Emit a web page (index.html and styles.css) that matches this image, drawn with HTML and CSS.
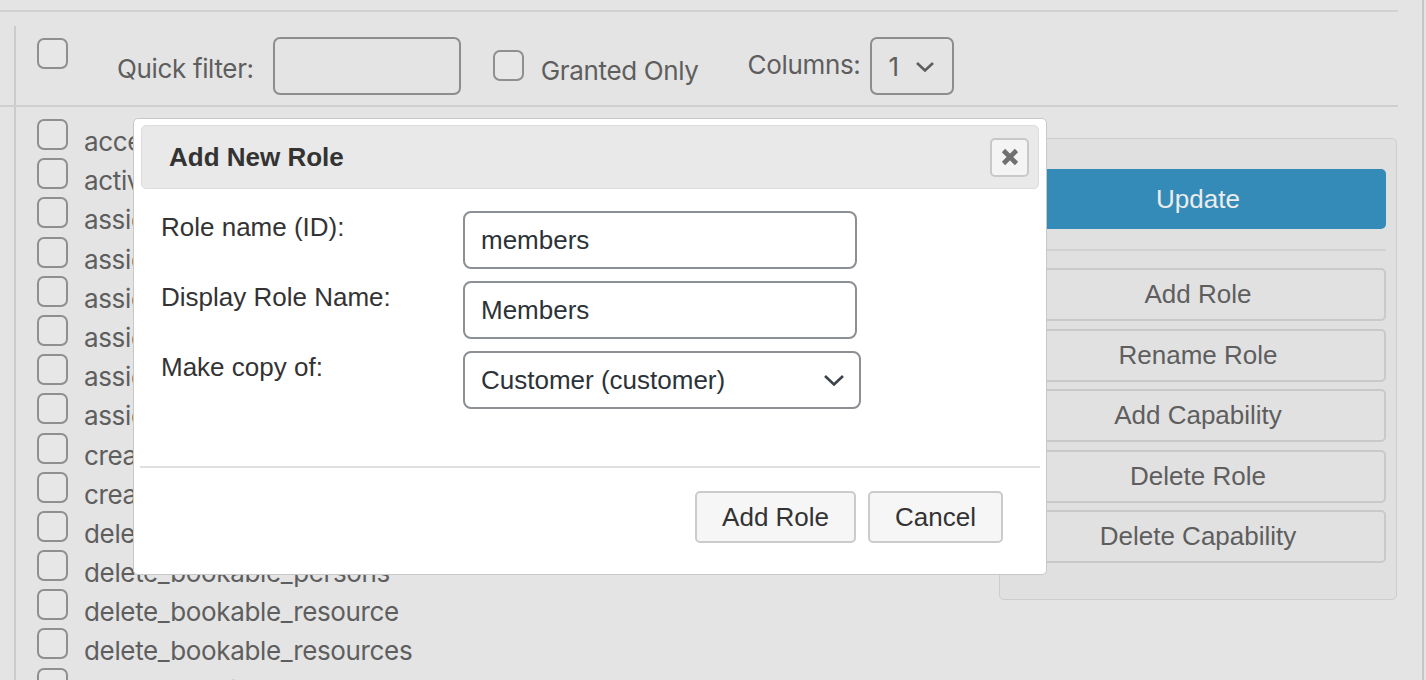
FILE: index.html
```html
<!DOCTYPE html>
<html lang="en">
<head>
<meta charset="utf-8">
<title>Capabilities</title>
<link rel="stylesheet" href="styles.css">
</head>
<body>
<div class="page">
  <div class="content">
    <div class="topline"></div>
    <div class="toolbar">
      <div class="toolbar-inner">
        <span class="cb cb-all"></span>
        <span class="tb-label lbl-filter">Quick filter:</span>
        <span class="tb-input"></span>
        <span class="cb cb-granted"></span>
        <span class="tb-label lbl-granted">Granted Only</span>
        <span class="tb-label lbl-cols">Columns:</span>
        <span class="tb-select">1
          <svg class="chev-sm" width="20" height="11" viewBox="0 0 20 11"><path d="M2 2 L10 9.5 L18 2" fill="none" stroke="#5e5e5e" stroke-width="2.6"/></svg>
        </span>
      </div>
    </div>
    <div class="main">
      <ul class="caps">
        <li class="cap"><span class="cb"></span><span class="cap-name">access_booking_calendar</span></li>
        <li class="cap"><span class="cb"></span><span class="cap-name">activate_plugins</span></li>
        <li class="cap"><span class="cb"></span><span class="cap-name">assign_bookable_person_terms</span></li>
        <li class="cap"><span class="cb"></span><span class="cap-name">assign_bookable_resource_terms</span></li>
        <li class="cap"><span class="cb"></span><span class="cap-name">assign_booking_terms</span></li>
        <li class="cap"><span class="cb"></span><span class="cap-name">assign_product_terms</span></li>
        <li class="cap"><span class="cb"></span><span class="cap-name">assign_shop_coupon_terms</span></li>
        <li class="cap"><span class="cb"></span><span class="cap-name">assign_shop_order_terms</span></li>
        <li class="cap"><span class="cb"></span><span class="cap-name">create_posts</span></li>
        <li class="cap"><span class="cb"></span><span class="cap-name">create_users</span></li>
        <li class="cap"><span class="cb"></span><span class="cap-name">delete_bookable_person</span></li>
        <li class="cap"><span class="cb"></span><span class="cap-name">delete_bookable_persons</span></li>
        <li class="cap"><span class="cb"></span><span class="cap-name">delete_bookable_resource</span></li>
        <li class="cap"><span class="cb"></span><span class="cap-name">delete_bookable_resources</span></li>
        <li class="cap"><span class="cb"></span><span class="cap-name">delete_booking</span></li>
      </ul>
      <aside class="side">
        <button class="btn-update">Update</button>
        <div class="side-sep"></div>
        <button class="side-btn">Add Role</button>
        <button class="side-btn">Rename Role</button>
        <button class="side-btn">Add Capability</button>
        <button class="side-btn">Delete Role</button>
        <button class="side-btn">Delete Capability</button>
      </aside>
    </div>
  </div>
  <div class="vrule"></div>

  <div class="dialog">
    <div class="dlg-title">
      <h2>Add New Role</h2>
      <button class="dlg-close" aria-label="Close">
        <svg width="20" height="20" viewBox="0 0 20 20"><path d="M3.5 3.5 L16.5 16.5 M16.5 3.5 L3.5 16.5" stroke="#707070" stroke-width="4.6"/></svg>
      </button>
    </div>
    <div class="dlg-form">
      <label class="dlg-label">Role name (ID):</label>
      <input class="dlg-input" type="text" value="members">
      <label class="dlg-label">Display Role Name:</label>
      <input class="dlg-input" type="text" value="Members">
      <label class="dlg-label">Make copy of:</label>
      <div class="dlg-select">
        <span>Customer (customer)</span>
        <svg width="22" height="13" viewBox="0 0 22 13"><path d="M2 2 L11 10.5 L20 2" fill="none" stroke="#3c434a" stroke-width="2.6"/></svg>
      </div>
    </div>
    <div class="dlg-sep"></div>
    <div class="dlg-actions">
      <button class="dlg-btn">Add Role</button>
      <button class="dlg-btn">Cancel</button>
    </div>
  </div>
</div>
</body>
</html>
```

FILE: styles.css
```css
* { box-sizing: border-box; }
html, body { margin: 0; padding: 0; }
body {
  background: #e4e4e4;
  width: 1426px;
  height: 680px;
  overflow: hidden;
  font-family: Inter, "Noto Sans", sans-serif;
  color: #5e5e5e;
}
.page { position: relative; display: flex; height: 680px; }
.content { width: 1422px; display: flex; flex-direction: column; }
.vrule { width: 2px; background: #c6c6c6; }

.topline { margin-top: 10px; width: 1398px; height: 2px; background: #d2d2d2; flex: none; }

.toolbar { width: 1398px; padding-top: 14px; border-bottom: 2px solid #cfcfcf; flex: none; }
.toolbar-inner {
  margin-left: 14px;
  border-left: 2px solid #cccccc;
  height: 79px;
  display: flex;
  align-items: flex-start;
}
.cb {
  display: block;
  flex: none;
  width: 31px;
  height: 31px;
  border: 2px solid #8f8f8f;
  border-radius: 7px;
  background: #e7e7e7;
}
.cb-all { margin: 12px 0 0 21px; }
.tb-label { font-size: 26px; line-height: 30px; letter-spacing: -0.35px; white-space: nowrap; }
.lbl-filter { margin: 28px 0 0 49px; }
.tb-input {
  margin: 11px 0 0 19px;
  width: 188px;
  height: 58px;
  border: 2px solid #8d8d8d;
  border-radius: 7px;
}
.cb-granted { margin: 24px 0 0 32px; }
.lbl-granted { margin: 30px 0 0 17px; }
.lbl-cols { margin: 24px 0 0 49px; }
.tb-select {
  margin: 11px 0 0 10px;
  width: 84px;
  height: 58px;
  border: 2px solid #8d8d8d;
  border-radius: 7px;
  display: flex;
  align-items: center;
  gap: 16px;
  padding-left: 16px;
  font-size: 26px;
}

.main { flex: 1; display: flex; justify-content: space-between; width: 1398px; min-height: 0; }
.caps {
  list-style: none;
  margin: 0 0 0 14px;
  padding: 12px 0 0 21px;
  border-left: 2px solid #cccccc;
  flex: 1;
  overflow: hidden;
}
.cap { height: 39.2px; display: flex; align-items: flex-start; }
.cap-name { margin: 7px 0 0 16px; font-size: 26px; line-height: 31px; letter-spacing: -0.35px; white-space: nowrap; }

.side {
  flex: none;
  margin: 31px 1px 0 0;
  width: 398px;
  height: 462px;
  border: 1px solid #cdcdcd;
  border-radius: 5px;
  background: #e0e0e0;
  padding: 30px 10px 0;
  display: flex;
  flex-direction: column;
}
.btn-update {
  height: 60px;
  border: 0;
  border-radius: 5px;
  background: #348bb8;
  color: #ececec;
  font: 26px "Liberation Sans", Arial, sans-serif;
  padding: 0;
}
.side-sep { height: 2px; background: #d2d2d2; margin: 20px 0 17px; }
.side-btn {
  height: 53px;
  margin-bottom: 7.6px;
  border: 2px solid #c9c9c9;
  border-radius: 5px;
  background: #e1e1e1;
  color: #5e5e5e;
  font: 26px "Liberation Sans", Arial, sans-serif;
  padding: 0;
}

.dialog {
  position: absolute;
  left: 133px;
  top: 118px;
  width: 914px;
  height: 457px;
  background: #ffffff;
  border: 1px solid #c8c8c8;
  border-radius: 5px;
  padding: 6px 7px 0;
  font-family: "Liberation Sans", Arial, sans-serif;
  color: #333333;
}
.dlg-title {
  height: 64px;
  border: 1px solid #dcdcdc;
  border-radius: 5px;
  background: #e9e9e9;
  display: flex;
  align-items: center;
  justify-content: space-between;
  padding: 0 9px 0 27px;
}
.dlg-title h2 { margin: 0; font-size: 26px; font-weight: bold; color: #333333; }
.dlg-close {
  width: 39px;
  height: 39px;
  border: 2px solid #c8c8c8;
  border-radius: 5px;
  background: #f4f4f4;
  display: flex;
  align-items: center;
  justify-content: center;
  padding: 0;
}
.dlg-form {
  display: grid;
  grid-template-columns: 302px auto;
  row-gap: 12px;
  padding: 22px 0 0 20px;
  align-items: start;
  justify-items: start;
}
.dlg-label { margin-top: 1px; font-size: 26px; color: #333333; }
.dlg-input {
  width: 394px;
  height: 58px;
  border: 2px solid #8c8f94;
  border-radius: 8px;
  padding: 0 16px;
  font: 26px "Liberation Sans", Arial, sans-serif;
  color: #2c3338;
  background: #fff;
  outline: none;
}
.dlg-select {
  width: 398px;
  height: 58px;
  border: 2px solid #8c8f94;
  border-radius: 8px;
  padding: 0 14px 0 16px;
  display: flex;
  align-items: center;
  justify-content: space-between;
  font-size: 26px;
  color: #2c3338;
}
.dlg-sep { margin: 57px -1px 0; height: 2px; background: #e0e0e0; }
.dlg-actions { display: flex; justify-content: flex-end; gap: 12px; margin-top: 23px; padding-right: 36px; }
.dlg-btn {
  height: 52px;
  padding: 0 25px;
  border: 2px solid #cbcbcb;
  border-radius: 5px;
  background: #f6f6f6;
  color: #333333;
  font: 26px "Liberation Sans", Arial, sans-serif;
}
```
